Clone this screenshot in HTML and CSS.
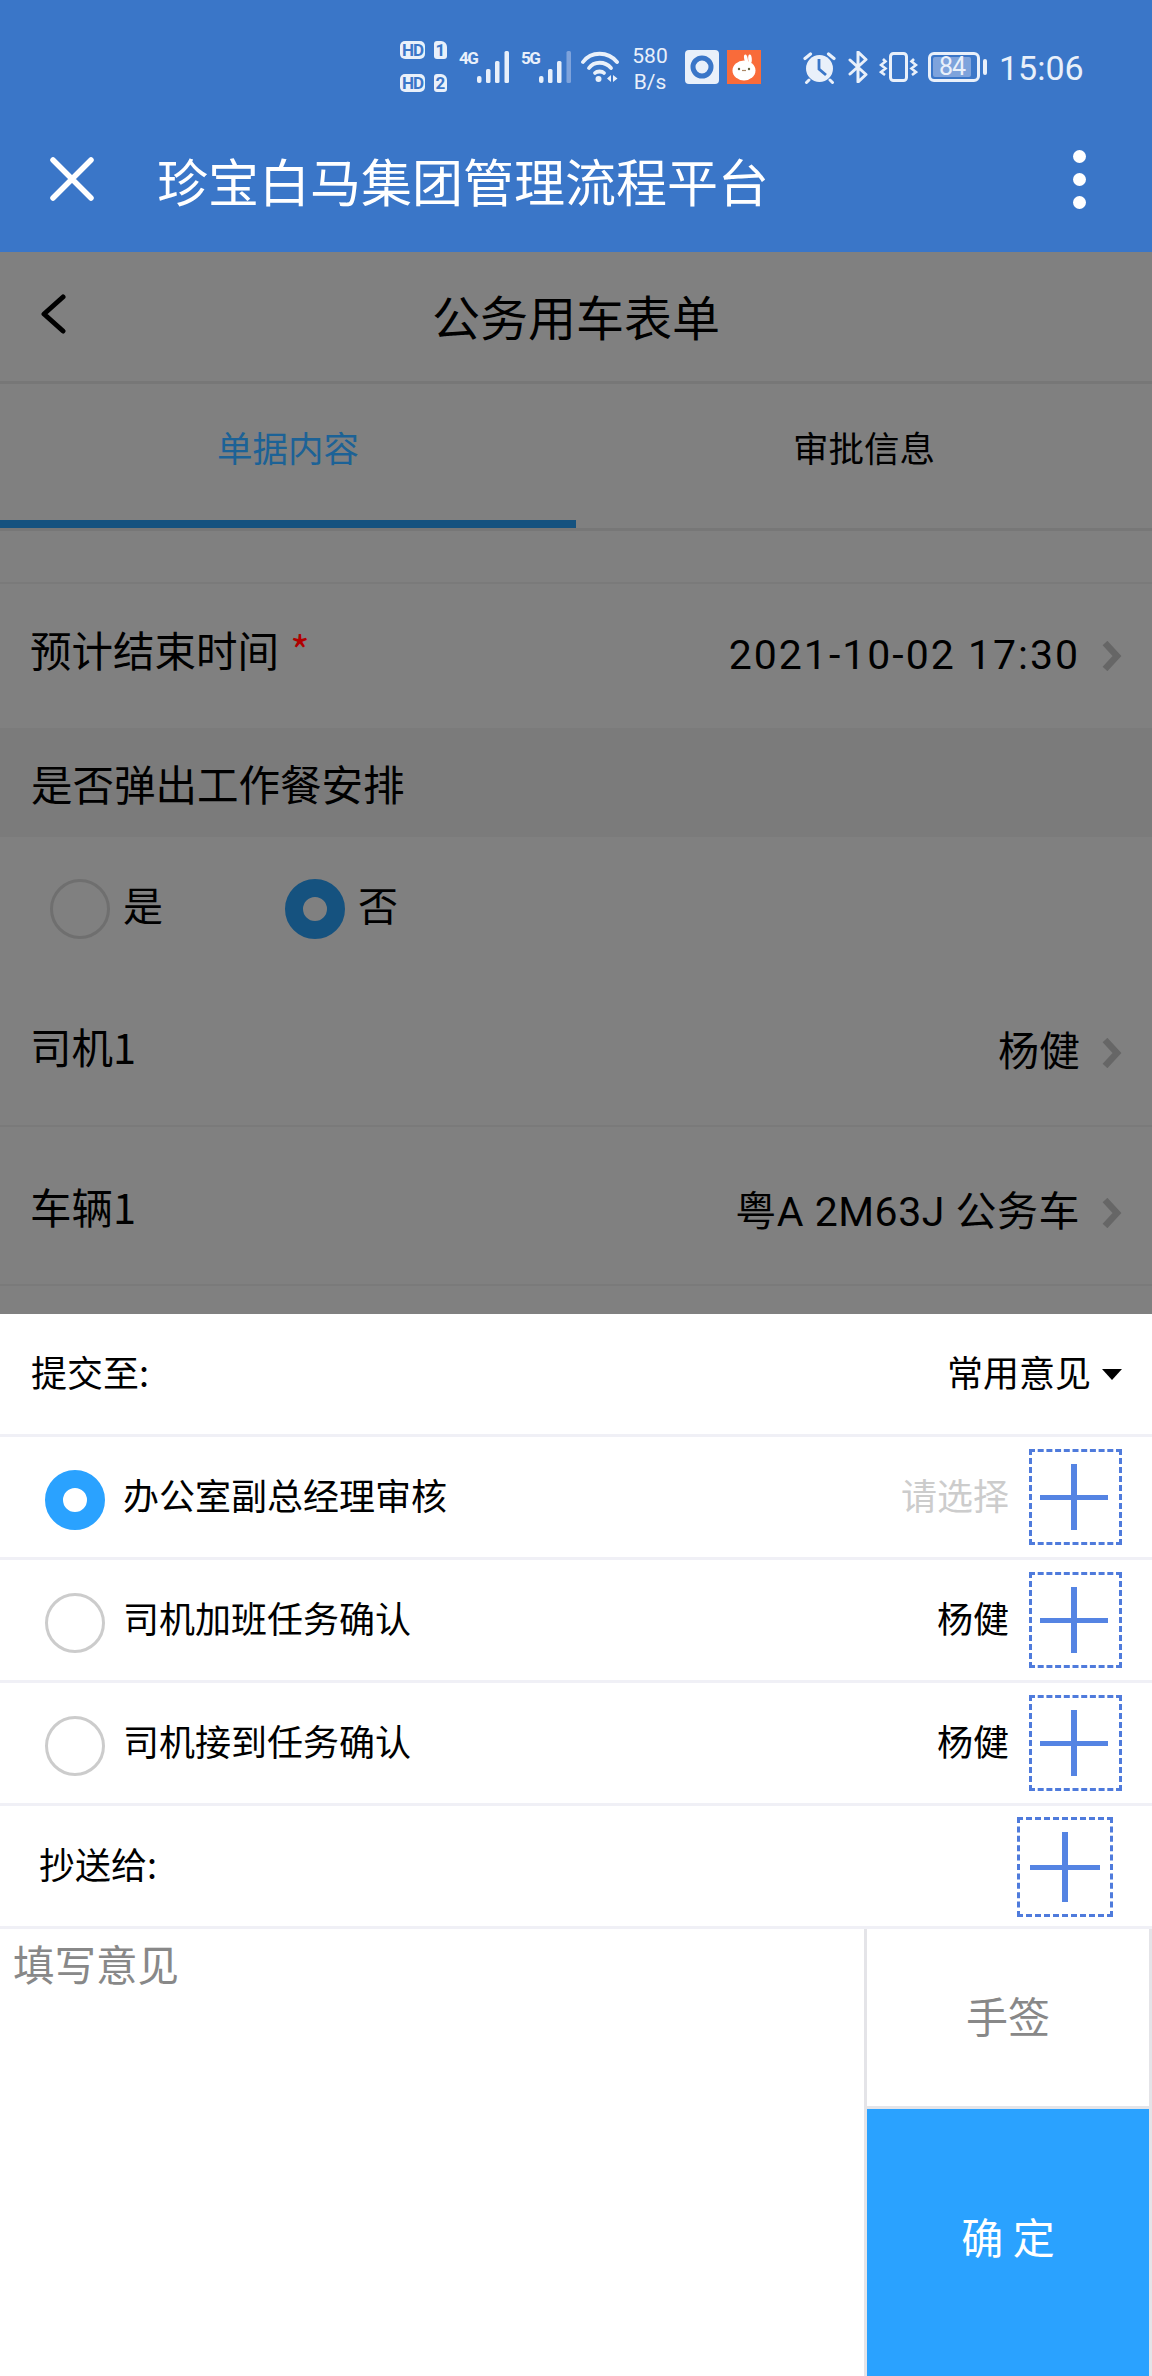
FILE: index.html
```html
<!DOCTYPE html>
<html lang="zh-CN">
<head>
  <meta charset="UTF-8">
  <meta name="viewport" content="width=device-width, initial-scale=1.0">
  <title>公务用车表单</title>
  <link rel="stylesheet" href="styles.css">
</head>
<body>
  <header class="app-bar">
    <div class="status-bar">
      <div class="sim-col">
        <div class="sim"><span class="hd">HD</span><span class="num">1</span></div>
        <div class="sim"><span class="hd">HD</span><span class="num">2</span></div>
      </div>
      <span class="net net-4g">4G</span>
      <svg class="bars" width="32" height="32" viewBox="0 0 32 32"><g fill="#e9f0fa"><rect x="0" y="25" width="4.5" height="7" rx="2"/><rect x="9" y="18" width="4.5" height="14" rx="1.5"/><rect x="18" y="10" width="4.5" height="22" rx="1.5"/><rect x="27.5" y="0" width="4.5" height="32" rx="1.5"/></g></svg>
      <span class="net net-5g">5G</span>
      <svg class="bars" width="32" height="32" viewBox="0 0 32 32"><g fill="#e9f0fa"><rect x="0" y="25" width="4.5" height="7" rx="2"/><rect x="9" y="18" width="4.5" height="14" rx="1.5"/><rect x="18" y="10" width="4.5" height="22" rx="1.5"/></g><rect x="27.5" y="0" width="4.5" height="32" rx="1.5" fill="#7ea3dc"/></svg>
      <svg class="wifi" width="38" height="32" viewBox="0 0 38 32"><g fill="none" stroke="#e9f0fa" stroke-width="3.8" stroke-linecap="round"><path d="M2 11C10 0 27 0 36 11"/><path d="M8 17C13 10 24 10 30 17"/><path d="M14 22C16 20 21 20 23 22"/></g><circle cx="17.500" cy="28" r="3" fill="#e9f0fa"/><path d="M30 24v7l-4-3.500zM32 24v7l4.500-3.500z" fill="#e9f0fa"/></svg>
      <div class="speed"><span>580</span><span>B/s</span></div>
      <svg class="app-icon" width="34" height="34" viewBox="0 0 34 34"><rect width="34" height="34" rx="4" fill="#e9f0fa"/><circle cx="17" cy="17" r="9" fill="none" stroke="#3a76c8" stroke-width="5"/></svg>
      <svg class="app-icon rabbit" width="34" height="34" viewBox="0 0 34 34"><rect width="34" height="34" fill="#f96b3a"/><ellipse cx="19" cy="9" rx="1.800" ry="4.500" fill="#fff" transform="rotate(-12 19 9)"/><ellipse cx="23" cy="9" rx="1.800" ry="4.500" fill="#fff" transform="rotate(-4 23 9)"/><ellipse cx="17" cy="20.500" rx="11.500" ry="10" fill="#fff"/><circle cx="12" cy="19" r="1.200" fill="#664"/><circle cx="22" cy="19" r="1.200" fill="#664"/><path d="M15 20.500h4" stroke="#a86" stroke-width="1.200"/></svg>
      <svg class="alarm" width="33" height="32" viewBox="0 0 33 32"><circle cx="16.500" cy="16.500" r="13.500" fill="#e9f0fa"/><path d="M16 7v10l7 6" fill="none" stroke="#3a76c8" stroke-width="2.800"/><path d="M2 6.500L7.500 2M31 6.500L25.500 2" stroke="#e9f0fa" stroke-width="3.200" stroke-linecap="round"/><path d="M6 28l-2.500 2.500M27 28l2.500 2.500" stroke="#e9f0fa" stroke-width="3" stroke-linecap="round"/></svg>
      <svg class="bt" width="20" height="32" viewBox="0 0 20 32"><path d="M2 9l16 14.500L10 31V1l8 7.500L2 23" fill="none" stroke="#e9f0fa" stroke-width="3" stroke-linejoin="round" stroke-linecap="round"/></svg>
      <svg class="vibrate" width="39" height="30" viewBox="0 0 39 30"><rect x="11.500" y="1.500" width="16" height="27" rx="3" fill="none" stroke="#e9f0fa" stroke-width="3"/><path d="M4 7l2.500 2.500L2 13l4.500 3.500L2 20l4 3M35 7l-2.500 2.500L37 13l-4.500 3.500L37 20l-4 3" fill="none" stroke="#e9f0fa" stroke-width="2.600"/></svg>
      <div class="battery"><span class="battery-body"><span class="battery-level">84</span></span><span class="battery-cap"></span></div>
      <span class="clock">15:06</span>
    </div>
    <div class="app-title-row">
      <svg class="close-icon" width="46" height="46" viewBox="0 0 46 46"><path d="M4 4l38 38M42 4L4 42" stroke="#fff" stroke-width="5.500" stroke-linecap="round"/></svg>
      <h1 class="app-title">珍宝白马集团管理流程平台</h1>
      <div class="more-dots"><i></i><i></i><i></i></div>
    </div>
  </header>

  <div class="page-head">
    <svg class="back-icon" width="26" height="40" viewBox="0 0 26 40"><path d="M23 3L4 20l19 17" fill="none" stroke="#000" stroke-width="5" stroke-linecap="round" stroke-linejoin="round"/></svg>
    <h2 class="page-title">公务用车表单</h2>
  </div>

  <div class="tabs">
    <div class="tab tab-active">单据内容</div>
    <div class="tab">审批信息</div>
  </div>

  <div class="form-gap"></div>

  <div class="form-row row-date">
    <span class="row-label">预计结束时间 <em class="required">*</em></span>
    <span class="row-value"><span class="value-text value-date">2021-10-02 17:30</span><svg class="row-arrow" width="20" height="30" viewBox="0 0 20 30"><path d="M3 2l12 13L3 28" fill="none" stroke="#666" stroke-width="6.500"/></svg></span>
  </div>

  <div class="form-section">是否弹出工作餐安排</div>

  <div class="form-radios">
    <label class="choice"><span class="dim-radio"></span><span class="choice-text">是</span></label>
    <label class="choice"><span class="dim-radio dim-radio-on"></span><span class="choice-text">否</span></label>
  </div>

  <div class="form-row row-driver">
    <span class="row-label">司机1</span>
    <span class="row-value"><span class="value-text">杨健</span><svg class="row-arrow" width="20" height="30" viewBox="0 0 20 30"><path d="M3 2l12 13L3 28" fill="none" stroke="#666" stroke-width="6.500"/></svg></span>
  </div>

  <div class="form-row row-car">
    <span class="row-label">车辆1</span>
    <span class="row-value"><span class="value-text value-car">粤A 2M63J 公务车</span><svg class="row-arrow" width="20" height="30" viewBox="0 0 20 30"><path d="M3 2l12 13L3 28" fill="none" stroke="#666" stroke-width="6.500"/></svg></span>
  </div>

  <div class="form-end"></div>

  <section class="sheet">
    <div class="sheet-row sheet-top">
      <span class="sheet-text">提交至:</span>
      <span class="common"><span class="sheet-text">常用意见</span><i class="caret"></i></span>
    </div>

    <div class="sheet-row step">
      <span class="radio radio-on"></span>
      <span class="sheet-text step-name">办公室副总经理审核</span>
      <span class="sheet-text step-user step-empty">请选择</span>
      <span class="add-box"></span>
    </div>
    <div class="sheet-row step">
      <span class="radio"></span>
      <span class="sheet-text step-name">司机加班任务确认</span>
      <span class="sheet-text step-user">杨健</span>
      <span class="add-box"></span>
    </div>
    <div class="sheet-row step">
      <span class="radio"></span>
      <span class="sheet-text step-name">司机接到任务确认</span>
      <span class="sheet-text step-user">杨健</span>
      <span class="add-box"></span>
    </div>

    <div class="sheet-row copy-row">
      <span class="sheet-text">抄送给:</span>
      <span class="add-box add-box-big"></span>
    </div>

    <div class="sheet-bottom">
      <div class="opinion">填写意见</div>
      <div class="actions">
        <div class="btn-sign">手签</div>
        <div class="btn-ok">确 定</div>
      </div>
    </div>
  </section>
</body>
</html>
```

FILE: styles.css
```css
* {
  box-sizing: border-box;
}
html, body {
  margin: 0;
  padding: 0;
}
body {
  width: 1152px;
  height: 2376px;
  overflow: hidden;
  background-color: #808080;
  color: #000;
  font-family: "Noto Sans CJK SC", "Noto Sans", sans-serif;
}
h1, h2 {
  margin: 0;
  font-weight: 400;
}

/* 顶部蓝色栏 */
.app-bar {
  height: 252px;
  background-color: #3a76c8;
  color: #fff;
}
.status-bar {
  height: 106px;
  display: flex;
  align-items: flex-start;
  padding: 41px 0 0 400px;
  color: #e9f0fa;
  font-family: Roboto, sans-serif;
}
.status-bar > * {
  flex-shrink: 0;
}
.sim-col {
  width: 47px;
  display: flex;
  flex-direction: column;
  gap: 15px;
}
.sim {
  display: flex;
  gap: 9px;
  height: 18px;
  font-size: 17px;
  font-weight: 700;
  line-height: 18px;
  color: #3a76c8;
  text-align: center;
}
.hd {
  width: 25px;
  background-color: #e9f0fa;
  border-radius: 5px;
  letter-spacing: -1px;
}
.num {
  width: 13px;
  background-color: #e9f0fa;
  border-radius: 3px 6px 3px 3px;
}
.net {
  width: 17px;
  margin-top: 10px;
  font-size: 17px;
  font-weight: 700;
  line-height: 15px;
  letter-spacing: -1.5px;
}
.net-4g, .net-5g {
  margin-left: 12px;
}
.bars {
  margin-top: 10px;
  margin-left: 1px;
}
.wifi {
  margin-top: 10px;
  margin-left: 10px;
}
.speed {
  width: 40px;
  margin-left: 11px;
  margin-top: 2px;
  display: flex;
  flex-direction: column;
  align-items: center;
  font-size: 21px;
  line-height: 26px;
}
.app-icon {
  margin-top: 9px;
  margin-left: 15px;
}
.rabbit {
  margin-left: 8px;
}
.alarm {
  margin-left: 42px;
  margin-top: 11px;
}
.bt {
  margin-top: 10px;
  margin-left: 12px;
}
.vibrate {
  margin-top: 11px;
  margin-left: 11px;
}
.battery {
  margin-left: 10px;
  margin-top: 11px;
  display: flex;
  align-items: center;
  height: 30px;
}
.battery-body {
  width: 52px;
  height: 30px;
  padding: 2px;
  border: 3px solid #e9f0fa;
  border-radius: 6px;
  display: flex;
}
.battery-level {
  width: 38px;
  background-color: #7ea3dc;
  border-radius: 2px;
  font-size: 25px;
  line-height: 20px;
  text-align: center;
  letter-spacing: -1px;
}
.battery-cap {
  width: 4px;
  height: 16px;
  margin-left: 3px;
  background-color: #e9f0fa;
  border-radius: 2px;
}
.clock {
  margin-left: 12px;
  margin-top: 7px;
  font-size: 34px;
  line-height: 40px;
}
.app-title-row {
  height: 146px;
  display: flex;
  align-items: center;
  padding: 0 66px 0 49px;
}
.app-title {
  margin-left: 62px;
  font-size: 51px;
  line-height: 70px;
  padding-top: 2px;
}
.more-dots {
  display: flex;
  flex-direction: column;
  gap: 10px;
  margin-left: auto;
}
.more-dots i {
  display: block;
  width: 13px;
  height: 13px;
  border-radius: 50%;
  background-color: #fff;
}

/* 页面标题 */
.page-head {
  height: 132px;
  border-bottom: 3px solid #777;
  display: flex;
  align-items: center;
  padding-left: 40px;
}
.back-icon {
  margin-bottom: 6px;
}
.page-title {
  margin-left: 366px;
  font-size: 48px;
  line-height: 60px;
  padding-bottom: 4px;
}

/* 标签页 */
.tabs {
  display: flex;
  height: 147px;
  border-bottom: 3px solid #777;
}
.tab {
  width: 576px;
  height: 144px;
  padding-top: 37px;
  font-size: 35.500px;
  line-height: 52px;
  text-align: center;
}
.tab-active {
  color: #1c6296;
  border-bottom: 8px solid #15527f;
}

/* 表单 */
.form-gap {
  height: 53px;
  border-bottom: 2px solid #7a7a7a;
}
.form-row {
  display: flex;
  justify-content: space-between;
  align-items: center;
  padding: 0 30px 0 30px;
  font-size: 41.500px;
}
.row-date {
  height: 144px;
}
.row-driver {
  height: 146px;
  border-bottom: 2px solid #7a7a7a;
}
.row-car {
  height: 159px;
  padding-top: 14px;
  border-bottom: 2px solid #7a7a7a;
}
.row-label {
  padding-bottom: 14px;
}
.required {
  color: #b00000;
  font-style: normal;
  margin-left: 2px;
}
.row-value {
  display: flex;
  align-items: center;
  font-family: Roboto, "Noto Sans CJK SC", sans-serif;
  font-size: 41px;
}
.value-text {
  padding-bottom: 10px;
}
.value-date {
  padding-bottom: 2px;
  letter-spacing: 2px;
}
.value-car {
  letter-spacing: 0.500px;
}
.row-arrow {
  margin-left: 22px;
}
.form-section {
  height: 109px;
  background-color: #7b7b7b;
  padding-left: 31px;
  font-size: 41.500px;
  line-height: 110px;
}
.form-radios {
  height: 144px;
  display: flex;
  align-items: center;
  padding-left: 50px;
  font-size: 40px;
}
.choice {
  display: flex;
  align-items: center;
  gap: 13px;
  width: 235px;
}
.choice-text {
  padding-bottom: 10px;
}
.dim-radio {
  width: 60px;
  height: 60px;
  border: 3px solid #6f6f6f;
  border-radius: 50%;
}
.dim-radio-on {
  border: 18px solid #15527f;
}
.form-end {
  height: 28px;
}

/* 底部弹层 */
.sheet {
  height: 1062px;
  background-color: #fff;
}
.sheet-row {
  display: flex;
  align-items: center;
  border-bottom: 3px solid #f0f0f6;
  font-size: 36px;
}
.sheet-text {
  padding-bottom: 6px;
}
.sheet-top {
  height: 123px;
  justify-content: space-between;
  padding: 0 30px 0 31px;
}
.common {
  display: flex;
  align-items: center;
}
.caret {
  width: 0;
  height: 0;
  margin-left: 11px;
  border-left: 10px solid transparent;
  border-right: 10px solid transparent;
  border-top: 11px solid #000;
}
.step {
  height: 123px;
  padding: 0 30px 0 45px;
}
.radio {
  width: 60px;
  height: 60px;
  margin-top: 6px;
  border: 3px solid #ccc;
  border-radius: 50%;
}
.radio-on {
  border: 18px solid #2aa2ff;
}
.step-name {
  margin-left: 18px;
  flex: 1;
}
.step-user {
  margin-right: 20px;
}
.step-empty {
  color: #ccc;
}
.add-box {
  position: relative;
  width: 93px;
  height: 96px;
  border: 3px dashed #4f7bdc;
}
.add-box::before {
  content: "";
  position: absolute;
  left: 8px;
  right: 11px;
  top: 43px;
  height: 5px;
  background-color: #5584e3;
}
.add-box::after {
  content: "";
  position: absolute;
  left: 39px;
  width: 6px;
  top: 12px;
  bottom: 12px;
  background-color: #5584e3;
}
.copy-row {
  height: 123px;
  justify-content: space-between;
  padding: 0 39px 0 39px;
}
.add-box-big {
  width: 96px;
  height: 100px;
  margin-top: 2px;
}
.add-box-big::before {
  left: 10px;
  right: 10px;
  top: 45px;
}
.add-box-big::after {
  left: 42px;
}
.sheet-bottom {
  display: flex;
  height: 447px;
}
.opinion {
  width: 864px;
  padding: 7px 13px;
  color: #888;
  font-size: 41.500px;
  line-height: 54px;
}
.actions {
  flex: 1;
  display: flex;
  flex-direction: column;
  border-left: 3px solid #e4e4e8;
  border-right: 3px solid #e4e4e8;
}
.btn-sign {
  height: 180px;
  border-bottom: 3px solid #e4e4e8;
  color: #888;
  font-size: 42px;
  line-height: 172px;
  text-align: center;
}
.btn-ok {
  flex: 1;
  background-color: #2aa2ff;
  color: #fff;
  font-size: 42px;
  line-height: 254px;
  text-align: center;
}
```
